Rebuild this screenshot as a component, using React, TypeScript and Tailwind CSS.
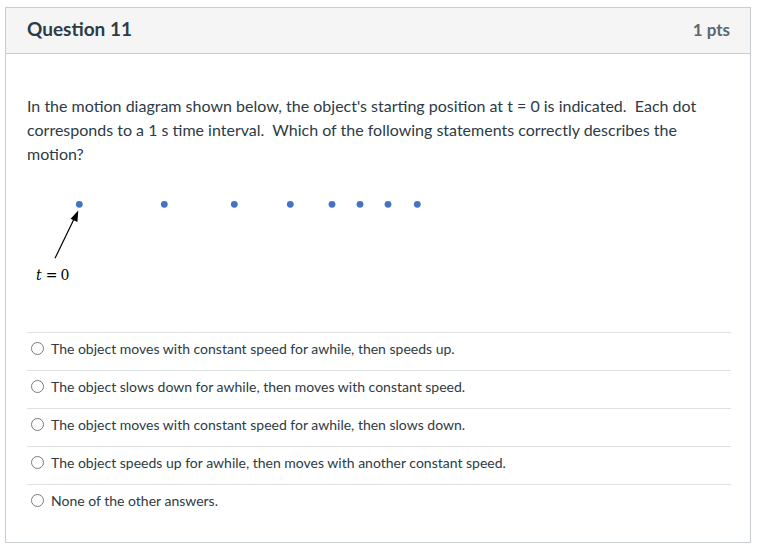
import React from 'react'

const answers = [
  'The object moves with constant speed for awhile, then speeds up.',
  'The object slows down for awhile, then moves with constant speed.',
  'The object moves with constant speed for awhile, then slows down.',
  'The object speeds up for awhile, then moves with another constant speed.',
  'None of the other answers.',
]

const dots = [52.3, 137.3, 207.3, 263.3, 305, 333, 361, 390.3]

function MotionDiagram() {
  return (
    <svg width="420" height="100" viewBox="0 0 420 100" className="block">
      {dots.map((x) => (
        <circle key={x} cx={x} cy={14.3} r={3.4} fill="#4472c4" />
      ))}
      <line x1={28} y1={68.3} x2={47.5} y2={28} stroke="#000" strokeWidth={1.2} />
      <polygon points="51.3,20.5 43.6,28.8 50.4,31.9" fill="#000" />
      <text
        x={9}
        y={90}
        fontSize={14}
        fill="#000"
        style={{ fontFamily: '"DejaVu Serif", "Liberation Serif", serif' }}
      >
        <tspan fontStyle="italic">t</tspan>
        <tspan dx={4}>=</tspan>
        <tspan dx={3}>0</tspan>
      </text>
    </svg>
  )
}

function Radio() {
  return (
    <span className="inline-block h-[13px] w-[13px] shrink-0 rounded-full border border-[#7a7a7a] bg-white" />
  )
}

export default function App() {
  return (
    <div
      className="min-h-[553px] w-[763px] bg-white pl-[5px] pt-[7px] text-[#2d3b45]"
      style={{ fontFamily: 'Lato, "Open Sans", sans-serif' }}
    >
      <div className="flex h-[536px] w-[746px] flex-col border border-[#c7cdd1]">
        {/* header */}
        <div className="flex h-[46px] shrink-0 items-center justify-between border-b border-[#c7cdd1] bg-[#f5f5f5] pb-[3px] pl-[21px] pr-[20px]">
          <h2 className="text-[19px] font-bold">Question 11</h2>
          <span className="pt-[2px] text-[17px] font-bold text-[#5b6770]">1 pts</span>
        </div>

        {/* body */}
        <div className="pl-[21px] pr-[19px] pt-[40px]">
          <p className="text-[16px] leading-[24px] whitespace-nowrap">
            In the motion diagram shown below, the object's starting position at t = 0 is indicated.{'\u00a0 '}Each dot
            <br />
            corresponds to a 1 s time interval.{'\u00a0 '}Which of the following statements correctly describes the
            <br />
            motion?
          </p>

          <div className="mt-[24px]">
            <MotionDiagram />
          </div>

          <div className="mt-[42px]">
            {answers.map((a) => (
              <div
                key={a}
                className="flex h-[38px] items-center gap-[7px] border-t border-[#dde1e3] pb-[6px] pl-[4px] text-[14px]"
              >
                <Radio />
                <span>{a}</span>
              </div>
            ))}
          </div>
        </div>
      </div>
    </div>
  )
}
